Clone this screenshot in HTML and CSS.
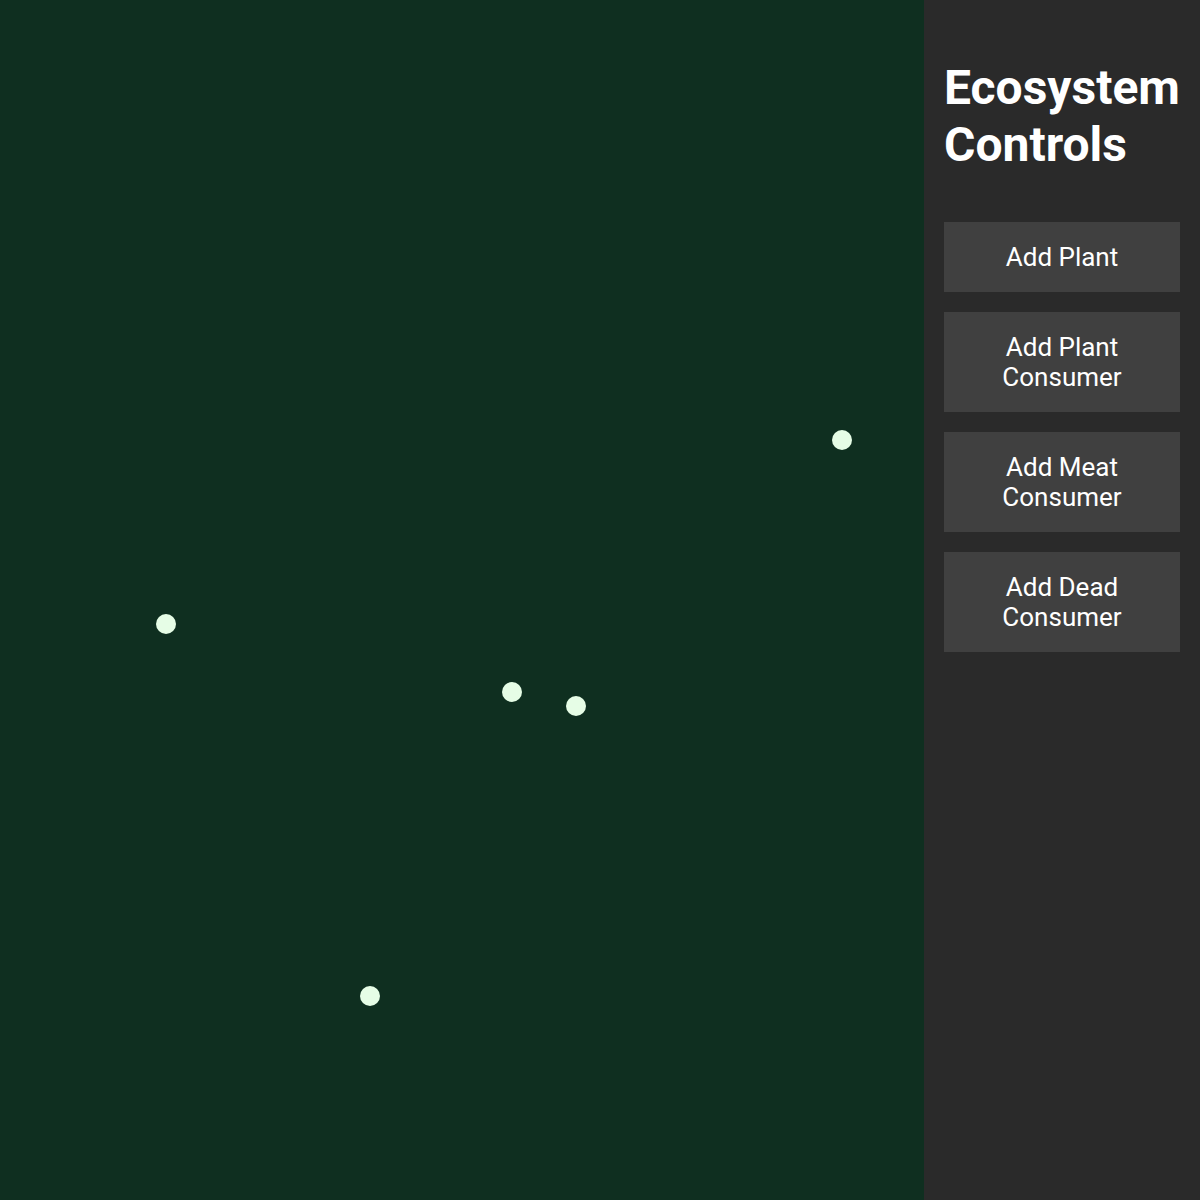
FILE: index.html
```html
<!DOCTYPE html>
<html lang="en">
<head>
    <meta charset="UTF-8">
    <meta name="viewport" content="width=device-width, initial-scale=1.0">
    <title>Ecosystem</title>
    <link rel="stylesheet" href="styles.css">
</head>
<body>
    <div class="app">
        <!-- simulation field -->
        <div class="world" id="world">
            <div class="plant" style="left: 832px; top: 430px;"></div>
            <div class="plant" style="left: 156px; top: 614px;"></div>
            <div class="plant" style="left: 502px; top: 682px;"></div>
            <div class="plant" style="left: 566px; top: 696px;"></div>
            <div class="plant" style="left: 360px; top: 986px;"></div>
        </div>

        <!-- control panel -->
        <div class="controls">
            <h1>Ecosystem Controls</h1>
            <button class="btn">Add Plant</button>
            <button class="btn">Add Plant Consumer</button>
            <button class="btn">Add Meat Consumer</button>
            <button class="btn">Add Dead Consumer</button>
        </div>
    </div>
</body>
</html>
```

FILE: styles.css
```css
/* page */
body {
    margin: 0;
    padding: 0;
    font-family: Roboto, 'Liberation Sans', sans-serif;
    background-color: #0f2f20;
}

.app {
    display: flex;
    height: 1200px;
}

/* simulation field */
.world {
    position: relative;
    flex: 1;
    background-color: #0f2f20;
    overflow: hidden;
}

.plant {
    position: absolute;
    width: 20px;
    height: 20px;
    border-radius: 50%;
    background-color: #e6fde6;
}

/* control panel */
.controls {
    width: 236px;
    padding: 20px;
    background-color: #2a2a2a;
    display: flex;
    flex-direction: column;
    gap: 20px;
}

.controls h1 {
    margin: 39px 0 29px;
    font-size: 48px;
    font-weight: 700;
    color: #fff;
}

.btn {
    font-family: inherit;
    font-size: 26px;
    padding: 20px;
    border: none;
    background-color: #404040;
    color: #fff;
    cursor: pointer;
}

.btn:hover {
    background-color: #4a4a4a;
}
```
